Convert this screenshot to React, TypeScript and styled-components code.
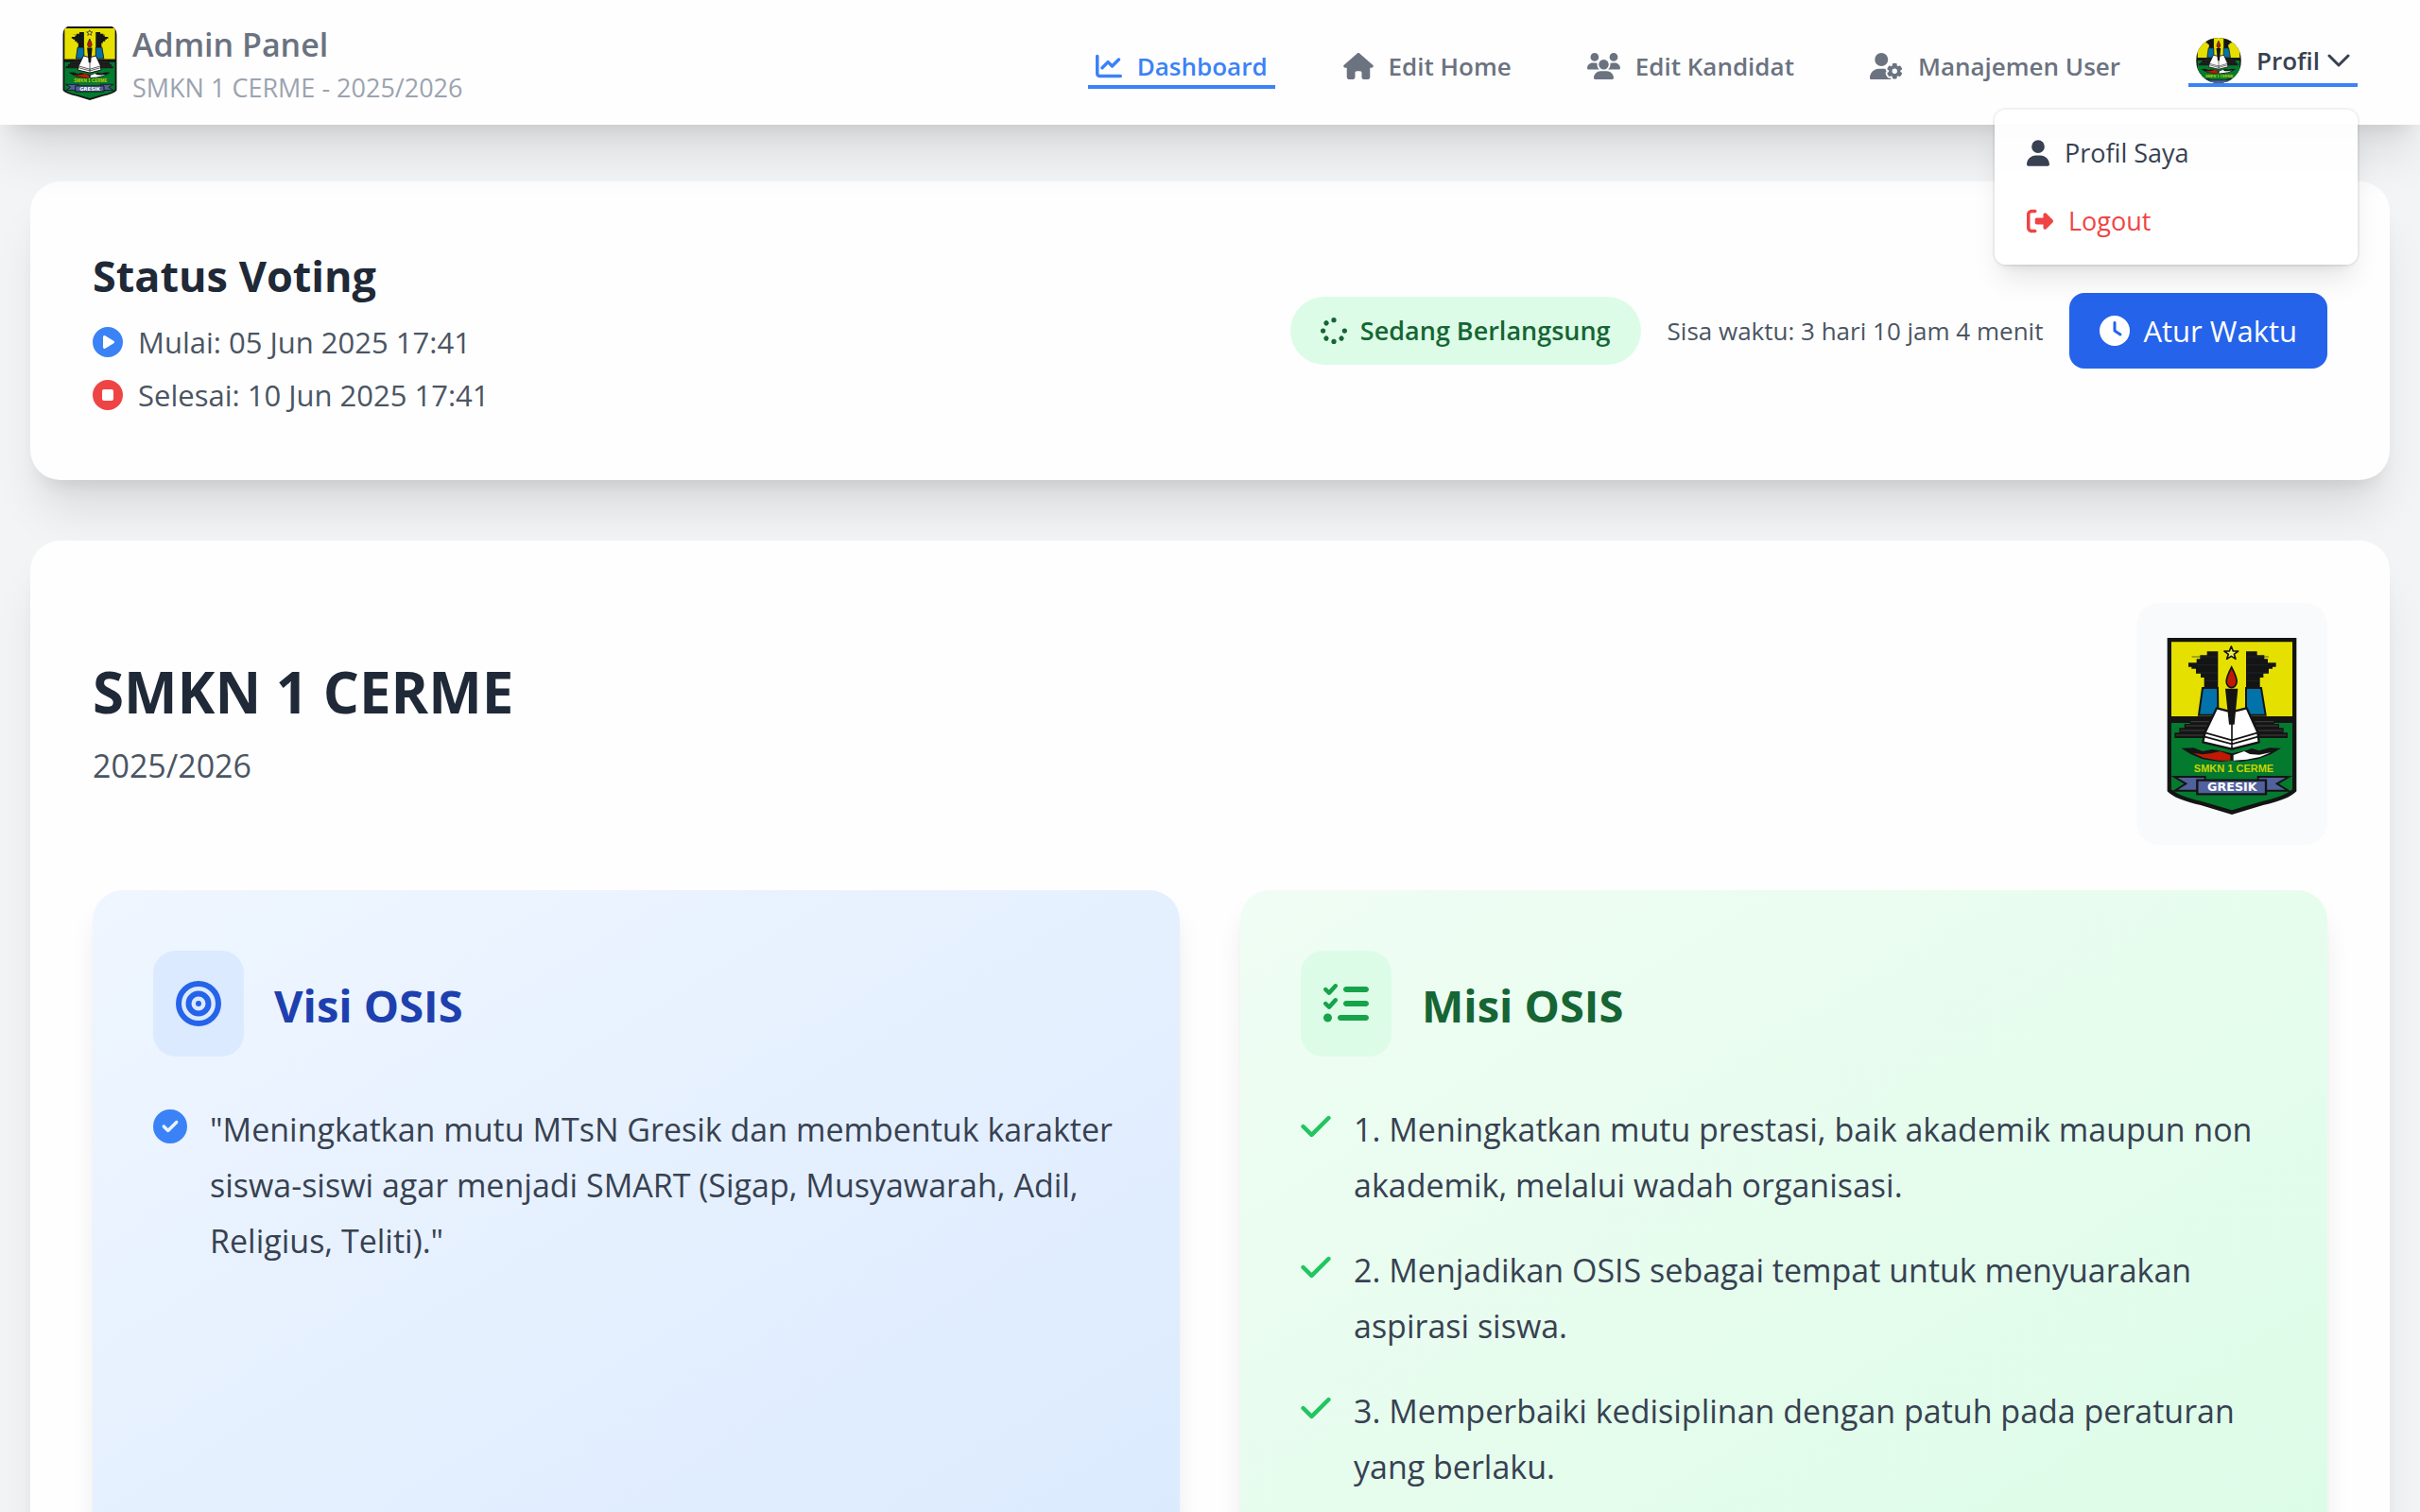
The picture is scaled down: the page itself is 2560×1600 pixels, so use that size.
import React from "react";
import styled, { createGlobalStyle } from "styled-components";
import {
  FaBullseye,
  FaChartLine,
  FaCheck,
  FaCircleCheck,
  FaCirclePlay,
  FaCircleStop,
  FaClock,
  FaHouse,
  FaListCheck,
  FaRightFromBracket,
  FaSpinner,
  FaUser,
  FaUserGear,
  FaUsers,
} from "react-icons/fa6";

const color = {
  page: "#f3f4f6",
  surface: "#fefefe",
  ink: "#1f2937",
  body: "#374151",
  text: "#4b5563",
  muted: "#6b7280",
  faint: "#9ca3af",
  blue: "#3b82f6",
  red: "#ef4444",
};

const shadow = {
  lg: "0 20px 30px -6px rgba(0,0,0,.1), 0 8px 12px -8px rgba(0,0,0,.1)",
  xl: "0 40px 50px -10px rgba(0,0,0,.1), 0 16px 20px -12px rgba(0,0,0,.1)",
};

const GlobalStyle = createGlobalStyle`
  *, *::before, *::after { box-sizing: border-box; }
  html { scrollbar-width: none; }
  body {
    margin: 0;
    background: ${color.page};
    color: ${color.ink};
    font-family: "Segoe UI", "Open Sans", "Noto Sans", sans-serif;
    font-size: 27px;
    line-height: 40px;
  }
  h1, h2, h3, p, ul { margin: 0; padding: 0; }
  ul { list-style: none; }
  button { font: inherit; color: inherit; border: 0; background: none; padding: 0; cursor: pointer; }
  a { color: inherit; text-decoration: none; }
  svg { flex: none; display: block; }
`;

const TopBar = styled.header`
  position: relative;
  z-index: 10;
  display: flex;
  align-items: center;
  justify-content: space-between;
  height: 132px;
  padding: 0 66px;
  background: ${color.surface};
  box-shadow: ${shadow.xl};
`;

const Brand = styled.a`
  display: flex;
  align-items: center;
  gap: 16px;
`;

const BrandLogo = styled.span`
  overflow: hidden;
  border-radius: 12px;
  svg { width: 58px; height: 80px; }
`;

const BrandText = styled.span`
  padding-top: 4px;
`;

const BrandName = styled.span`
  display: block;
  color: ${color.muted};
  font-size: 34px;
  font-weight: 600;
  line-height: 50px;
`;

const BrandTerm = styled.span`
  display: block;
  color: ${color.faint};
  line-height: 42px;
`;

const Nav = styled.nav`
  display: flex;
  align-items: center;
  gap: 64px;
`;

const NavLink = styled.a<{ $active?: boolean; $icon: number }>`
  display: flex;
  align-items: center;
  gap: 16px;
  padding: 12px 8px 0;
  border-bottom: 4px solid ${(p) => (p.$active ? color.blue : "transparent")};
  color: ${(p) => (p.$active ? color.blue : color.muted)};
  font-size: 26px;
  font-weight: 600;
  white-space: nowrap;
  svg { width: ${(p) => p.$icon}px; height: 28px; }
`;

const Profile = styled.div`
  position: relative;
`;

const ProfileButton = styled.button`
  display: flex;
  align-items: center;
  gap: 8px;
  padding: 0 8px;
  border-bottom: 4px solid ${color.blue};
  color: ${color.body};
  font-size: 26px;
  font-weight: 600;
`;

const Avatar = styled.span`
  width: 48px;
  height: 48px;
  margin-right: 8px;
  overflow: hidden;
  border-radius: 50%;
  svg { width: 48px; height: 48px; }
`;

const Menu = styled.div`
  position: absolute;
  top: calc(100% + 24px);
  right: 0;
  width: 384px;
  padding: 10px 0;
  border-radius: 12px;
  background: rgba(255, 255, 255, 0.94);
  box-shadow: 0 0 0 2px rgba(0, 0, 0, 0.05), ${shadow.lg};
`;

const MenuItem = styled.button<{ $danger?: boolean; $icon: number }>`
  display: flex;
  align-items: center;
  gap: 16px;
  width: 100%;
  padding: 16px 34px;
  color: ${(p) => (p.$danger ? color.red : color.body)};
  svg { width: ${(p) => p.$icon}px; height: 28px; }
`;

const Page = styled.main`
  display: flex;
  flex-direction: column;
  gap: 64px;
  padding: 60px 32px 64px;
`;

const Card = styled.section`
  padding: 66px;
  border-radius: 32px;
  background: ${color.surface};
  box-shadow: ${shadow.xl};
`;

const CardRow = styled.div`
  display: flex;
  align-items: center;
  justify-content: space-between;
`;

const StatusTitle = styled.h2`
  margin-bottom: 12px;
  font-size: 45px;
  font-weight: 700;
  line-height: 68px;
`;

const Schedule = styled.ul`
  display: grid;
  gap: 8px;
`;

const ScheduleItem = styled.li<{ $tint: string }>`
  display: flex;
  align-items: center;
  gap: 16px;
  color: ${color.text};
  font-size: 31px;
  line-height: 48px;
  svg { width: 32px; height: 32px; color: ${(p) => p.$tint}; }
`;

const StatusSide = styled.div`
  display: flex;
  align-items: center;
  gap: 28px;
`;

const Badge = styled.span`
  display: flex;
  align-items: center;
  gap: 14px;
  padding: 16px 32px;
  border-radius: 36px;
  background: #dcfce7;
  color: #166534;
  font-weight: 600;
  svg { width: 28px; height: 28px; }
`;

const Remaining = styled.span`
  color: ${color.text};
  font-size: 26px;
`;

const PrimaryButton = styled.button`
  display: flex;
  align-items: center;
  gap: 14px;
  padding: 16px 32px;
  border-radius: 16px;
  background: #2563eb;
  color: #ffffff;
  font-size: 31px;
  line-height: 48px;
  svg { width: 32px; height: 32px; }
`;

const SchoolHeader = styled(CardRow)`
  margin-bottom: 48px;
`;

const SchoolName = styled.h1`
  margin-bottom: 16px;
  font-size: 60px;
  font-weight: 700;
  line-height: 72px;
`;

const SchoolYear = styled.p`
  color: ${color.text};
  font-size: 34px;
  line-height: 52px;
`;

const LogoFrame = styled.div`
  padding: 32px;
  border-radius: 24px;
  background: #f9fafb;
  svg { width: 138px; height: 192px; }
`;

const Panels = styled.div`
  display: grid;
  grid-template-columns: 1fr 1fr;
  gap: 64px;
`;

const Panel = styled.section<{ $from: string; $to: string }>`
  padding: 64px;
  border-radius: 32px;
  background: linear-gradient(to bottom right, ${(p) => p.$from}, ${(p) => p.$to});
  box-shadow: ${shadow.lg};
`;

const PanelHeader = styled.header`
  display: flex;
  align-items: center;
  gap: 32px;
  margin-bottom: 48px;
`;

const PanelIcon = styled.span<{ $bg: string; $fg: string }>`
  padding: 32px 24px;
  border-radius: 24px;
  background: ${(p) => p.$bg};
  color: ${(p) => p.$fg};
  svg { width: 48px; height: 48px; }
`;

const PanelTitle = styled.h3<{ $fg: string }>`
  padding-top: 4px;
  color: ${(p) => p.$fg};
  font-size: 47px;
  font-weight: 700;
  line-height: 64px;
`;

const Points = styled.ul`
  display: grid;
  gap: 31px;
`;

const Point = styled.li<{ $tint: string; $icon: number }>`
  display: flex;
  align-items: flex-start;
  gap: 24px;
  color: ${color.body};
  font-size: 34px;
  line-height: 59px;
  svg {
    width: ${(p) => p.$icon}px;
    height: 36px;
    margin-top: 8px;
    color: ${(p) => p.$tint};
  }
`;

function Crest({ round = false }: { round?: boolean }) {
  const ink = "#141414";
  return (
    <svg viewBox="36 30 414 576" preserveAspectRatio={round ? "xMidYMid slice" : "xMidYMid meet"} aria-hidden="true">
      <path d="M38 45H448V532Q424 558 342 576L243 606L144 576Q62 558 38 532Z" fill={ink} />
      <path d="M51 58H435V294H51Z" fill="#e6e000" />
      <path d="M51 315H435V526Q412 548 336 565L243 592L150 565Q74 548 51 526Z" fill="#047a2f" />
      {/* gate towers */}
      <path d="M164 88H199V206H155V171H144V158H129V143H115V137H105V124H131V112H142V100H164Z" fill={ink} />
      <path d="M288 88H323V100H346V112H357V124H383V137H372V143H360V158H343V171H332V206H288Z" fill={ink} />
      <path d="M150 204L198 204L199 268L188 290H138Z" fill="#0272ab" stroke={ink} strokeWidth="6" />
      <path d="M336 204L288 204L288 268L299 290H350Z" fill="#0272ab" stroke={ink} strokeWidth="6" />
      <path d="M51 294H435V315H51Z" fill={ink} />
      <path d="M116 105H197M131 131H197M131 156H197M158 181H197M290 105H360M290 131H356M290 156H356M290 181H330" stroke="#17303d" strokeWidth="2" />
      {/* steps */}
      <path d="M110 306H378V318H393V331H407V346H420V363H61V346H76V331H92V318H110Z" fill={ink} />
      <path d="M112 311H172M96 324H166M80 339H160M66 354H154M316 311H376M320 324H390M326 339H404M332 354H416" stroke="#4b4b4b" strokeWidth="2.5" />
      {/* star */}
      <path d="M241 72L247 87H263L250 97L255 112L241 103L227 112L232 97L219 87H235Z" fill="#f2ee55" stroke={ink} strokeWidth="5" strokeLinejoin="round" />
      {/* book */}
      <path d="M195 268L242 280L290 268L325 345L329 376L243 398L151 376L158 345Z" fill="#fff" stroke={ink} strokeWidth="7" strokeLinejoin="round" />
      <path d="M158 346L243 370L325 346M154 358L243 382L328 358M243 300V396" fill="none" stroke={ink} strokeWidth="5" />
      {/* torch */}
      <path d="M222 206H262L251 320H234Z" fill={ink} />
      <path d="M242 138Q262 176 258 188Q254 202 242 203Q230 202 226 188Q222 176 242 138Z" fill="#c01a04" stroke={ink} strokeWidth="5" />
      {/* quill wings */}
      <path d="M82 395L122 394L150 405L180 399L200 402L243 412L290 402L306 396L330 403L362 394L399 395L368 414L325 430L270 438L243 434L205 438L150 430L112 414Z" fill={ink} />
      <path d="M120 410L150 415L176 412L205 405L238 417V434L200 434L152 425Z" fill="#c01a04" />
      <path d="M366 409L330 416L300 414L282 405L248 417V434L290 431L332 423Z" fill="#fff" />
      <text x="249" y="471" textAnchor="middle" fontFamily="Liberation Sans, sans-serif" fontWeight="700" fontSize="33" fill="#c8d400">
        SMKN 1 CERME
      </text>
      {/* ribbon */}
      <path d="M60 486H158V530H62L97 508ZM424 486H326V530H422L386 508Z" fill="#51619c" stroke={ink} strokeWidth="6" />
      <path d="M133 497H351V541H133Z" fill="#51619c" stroke={ink} strokeWidth="7" />
      {!round && (
        <text x="244" y="531" textAnchor="middle" fontFamily="DejaVu Sans, sans-serif" fontWeight="700" fontSize="38" fill="#fff">
          GRESIK
        </text>
      )}
    </svg>
  );
}

function Chevron() {
  return (
    <svg width="24" height="16" viewBox="0 0 24 16" fill="none" stroke="currentColor" strokeWidth="3" strokeLinecap="round" strokeLinejoin="round" aria-hidden="true">
      <path d="M2 3L12 13L22 3" />
    </svg>
  );
}

const missions = [
  "1. Meningkatkan mutu prestasi, baik akademik maupun non akademik, melalui wadah organisasi.",
  "2. Menjadikan OSIS sebagai tempat untuk menyuarakan aspirasi siswa.",
  "3. Memperbaiki kedisiplinan dengan patuh pada peraturan yang berlaku.",
];

export default function App() {
  return (
    <>
      <GlobalStyle />
      <TopBar>
        <Brand href="#">
          <BrandLogo>
            <Crest />
          </BrandLogo>
          <BrandText>
            <BrandName>Admin Panel</BrandName>
            <BrandTerm>SMKN 1 CERME - 2025/2026</BrandTerm>
          </BrandText>
        </Brand>
        <Nav>
          <NavLink href="#dashboard" $icon={28} $active>
            <FaChartLine />
            Dashboard
          </NavLink>
          <NavLink href="#home" $icon={32}>
            <FaHouse />
            Edit Home
          </NavLink>
          <NavLink href="#kandidat" $icon={35}>
            <FaUsers />
            Edit Kandidat
          </NavLink>
          <NavLink href="#user" $icon={35}>
            <FaUserGear />
            Manajemen User
          </NavLink>
          <Profile>
            <ProfileButton type="button" aria-expanded="true">
              <Avatar>
                <Crest round />
              </Avatar>
              Profil
              <Chevron />
            </ProfileButton>
            <Menu>
              <MenuItem type="button" $icon={24}>
                <FaUser />
                Profil Saya
              </MenuItem>
              <MenuItem type="button" $icon={28} $danger>
                <FaRightFromBracket />
                Logout
              </MenuItem>
            </Menu>
          </Profile>
        </Nav>
      </TopBar>
      <Page>
        <Card>
          <CardRow>
            <div>
              <StatusTitle>Status Voting</StatusTitle>
              <Schedule>
                <ScheduleItem $tint={color.blue}>
                  <FaCirclePlay />
                  Mulai: 05 Jun 2025 17:41
                </ScheduleItem>
                <ScheduleItem $tint={color.red}>
                  <FaCircleStop />
                  Selesai: 10 Jun 2025 17:41
                </ScheduleItem>
              </Schedule>
            </div>
            <StatusSide>
              <Badge>
                <FaSpinner />
                Sedang Berlangsung
              </Badge>
              <Remaining>Sisa waktu: 3 hari 10 jam 4 menit</Remaining>
              <PrimaryButton type="button">
                <FaClock />
                Atur Waktu
              </PrimaryButton>
            </StatusSide>
          </CardRow>
        </Card>
        <Card>
          <SchoolHeader>
            <div>
              <SchoolName>SMKN 1 CERME</SchoolName>
              <SchoolYear>2025/2026</SchoolYear>
            </div>
            <LogoFrame>
              <Crest />
            </LogoFrame>
          </SchoolHeader>
          <Panels>
            <Panel $from="#eff6ff" $to="#dbeafe">
              <PanelHeader>
                <PanelIcon $bg="#dbeafe" $fg="#2563eb">
                  <FaBullseye />
                </PanelIcon>
                <PanelTitle $fg="#1e40af">Visi OSIS</PanelTitle>
              </PanelHeader>
              <Points>
                <Point $tint={color.blue} $icon={36}>
                  <FaCircleCheck />
                  "Meningkatkan mutu MTsN Gresik dan membentuk karakter siswa-siswi agar menjadi SMART (Sigap,
                  Musyawarah, Adil, Religius, Teliti)."
                </Point>
              </Points>
            </Panel>
            <Panel $from="#f0fdf4" $to="#dcfce7">
              <PanelHeader>
                <PanelIcon $bg="#dcfce7" $fg="#16a34a">
                  <FaListCheck />
                </PanelIcon>
                <PanelTitle $fg="#166534">Misi OSIS</PanelTitle>
              </PanelHeader>
              <Points>
                {missions.map((mission) => (
                  <Point key={mission} $tint="#22c55e" $icon={32}>
                    <FaCheck />
                    {mission}
                  </Point>
                ))}
              </Points>
            </Panel>
          </Panels>
        </Card>
      </Page>
    </>
  );
}
